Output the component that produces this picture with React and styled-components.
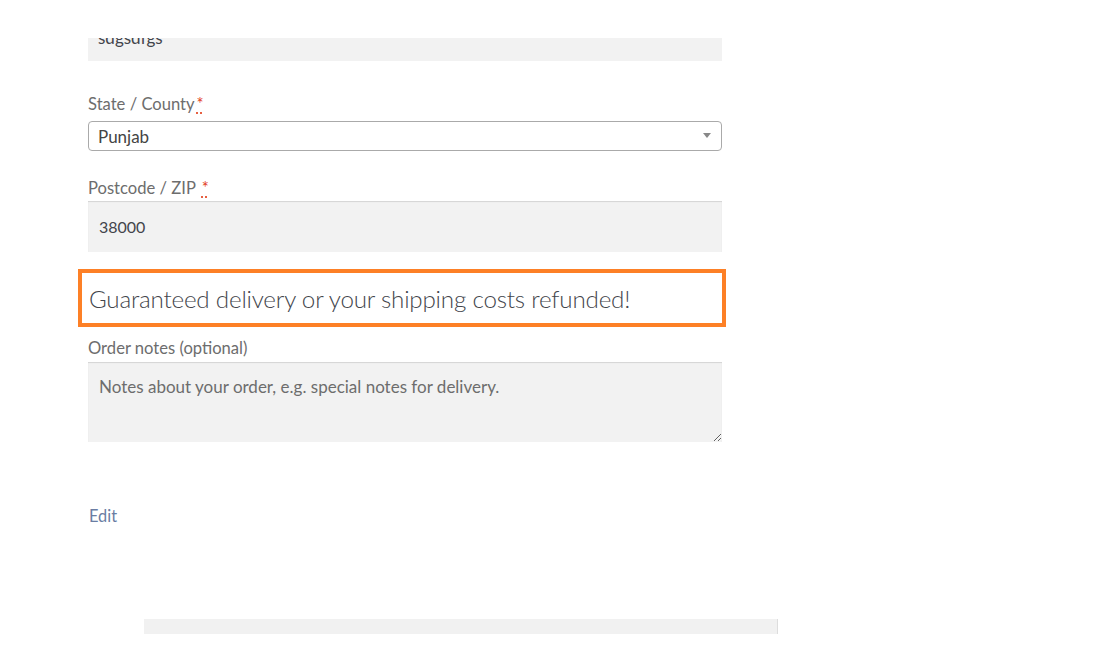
import React from "react";
import styled, { createGlobalStyle } from "styled-components";

const GlobalStyle = createGlobalStyle`
  html, body {
    margin: 0;
    padding: 0;
    background: #fff;
  }
  body {
    font-family: Lato, "Open Sans", "Liberation Sans", sans-serif;
    color: #6d6d6d;
    font-size: 16px;
  }
  * {
    box-sizing: border-box;
  }
`;

const Page = styled.div`
  width: 1113px;
  height: 656px;
  overflow: hidden;
  padding-top: 38px;
`;

const Form = styled.div`
  width: 634px;
  margin-left: 88px;
  display: flex;
  flex-direction: column;
`;

const ClippedInput = styled.div`
  height: 23px;
  overflow: hidden;
  background: #f2f2f2;
  padding: 0 10px;
  color: #43454b;
  font-size: 17px;

  span {
    display: block;
    margin-top: -12px;
    line-height: 24px;
  }
`;

const Label = styled.label`
  display: block;
  margin-top: ${({ $top }) => $top}px;
  margin-bottom: ${({ $bottom }) => $bottom}px;
  line-height: 24px;
  font-size: 16.6px;
  color: #6d6d6d;
`;

const Required = styled.abbr`
  color: #e2401c;
  text-decoration: underline dotted;
  text-underline-offset: 3px;
  margin-left: 2px;
  cursor: help;
`;

const Select = styled.div`
  height: 30px;
  border: 1px solid #aaa;
  border-radius: 4px;
  background: #fff;
  display: flex;
  align-items: center;
  justify-content: space-between;
  padding: 0 10px 0 9px;
  color: #444;
  font-size: 17px;
`;

const Caret = styled.span`
  width: 0;
  height: 0;
  border-left: 4px solid transparent;
  border-right: 4px solid transparent;
  border-top: 5px solid #888;
  margin-top: -2px;
`;

const Input = styled.input`
  display: block;
  width: 100%;
  height: 51px;
  border: 0;
  outline: none;
  background: #f2f2f2;
  box-shadow: inset 0 1px 1px rgba(0, 0, 0, 0.125);
  padding: 0 10px 0 11px;
  font-family: inherit;
  font-size: 16px;
  color: #43454b;
`;

const Notice = styled.div`
  margin: 17px -4px 0 -10px;
  border: 4px solid #fd8026;
  height: 58px;
  display: flex;
  align-items: center;
  padding-left: 7px;
  padding-top: 0;
  font-size: 24.2px;
  font-weight: 300;
  color: #43454b;
  letter-spacing: -0.2px;
`;

const TextArea = styled.textarea`
  display: block;
  width: 100%;
  height: 80px;
  border: 0;
  outline: none;
  resize: vertical;
  background: #f2f2f2;
  box-shadow: inset 0 1px 1px rgba(0, 0, 0, 0.125);
  padding: 13px 10px 10px 11px;
  font-family: inherit;
  font-size: 17px;
  line-height: 24px;
  color: #43454b;

  &::placeholder {
    color: #6d6d6d;
  }
`;

const EditLink = styled.a`
  display: block;
  margin-top: 62px;
  line-height: 24px;
  color: #6a7da3;
  text-decoration: none;
  font-size: 16.4px;
  padding-left: 1px;
`;

const BottomStrip = styled.div`
  margin: 91px 0 0 144px;
  width: 634px;
  height: 15px;
  background: #f1f1f1;
  border-right: 1px solid #ddd;
`;

export default function App() {
  return (
    <>
      <GlobalStyle />
      <Page>
        <Form>
          <ClippedInput>
            <span>sdgsdfgs</span>
          </ClippedInput>

          <Label $top={31} $bottom={5}>
            State / County<Required title="required">*</Required>
          </Label>
          <Select>
            <span>Punjab</span>
            <Caret />
          </Select>

          <Label $top={25} $bottom={1}>
            Postcode / ZIP <Required title="required">*</Required>
          </Label>
          <Input defaultValue="38000" />

          <Notice>Guaranteed delivery or your shipping costs refunded!</Notice>

          <Label $top={9} $bottom={2}>
            Order notes (optional)
          </Label>
          <TextArea placeholder="Notes about your order, e.g. special notes for delivery." />

          <EditLink href="#">Edit</EditLink>
        </Form>
        <BottomStrip />
      </Page>
    </>
  );
}
